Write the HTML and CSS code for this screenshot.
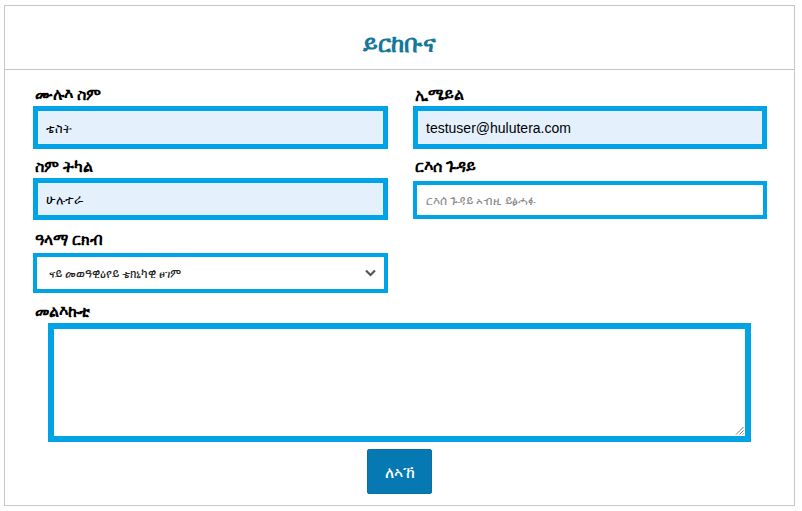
FILE: index.html
```html
<!DOCTYPE html>
<html lang="ti">
<head>
<meta charset="utf-8">
<title>ይርከቡና</title>
<link rel="stylesheet" href="styles.css">
</head>
<body>
<div class="card">
  <div class="header"><h1 class="title">ይርከቡና</h1></div>
  <form class="form">
    <div class="grid">
      <div class="field">
        <label class="label">ሙሉእ ስም</label>
        <input class="input filled" type="text" value="ቴስት">
      </div>
      <div class="field">
        <label class="label">ኢሜይል</label>
        <input class="input filled email" type="text" value="testuser@hulutera.com">
      </div>
      <div class="field row2">
        <label class="label">ስም ትካል</label>
        <input class="input filled tall2" type="text" value="ሁሉተራ">
      </div>
      <div class="field row2">
        <label class="label">ርእሰ ጉዳይ</label>
        <input class="input plain" type="text" placeholder="ርእሰ ጉዳይ ኣብዚ ይፅሓፉ">
      </div>
      <div class="field row3">
        <label class="label">ዓላማ ርክብ</label>
        <div class="select">
          <span class="select-text">ናይ መወዓዊዕየይ ቴክኒካዊ ፀገም</span>
          <svg class="chev" width="11" height="8" viewBox="0 0 11 8"><path d="M1 1.5 L5.5 6 L10 1.5" fill="none" stroke="#555" stroke-width="2.2"/></svg>
        </div>
      </div>
    </div>
    <div class="field row4">
      <label class="label">መልእኩቲ</label>
      <div class="textarea">
        <svg class="grip" width="9" height="9" viewBox="0 0 9 9"><path d="M8.5 1 L1 8.5 M8.5 4.5 L4.5 8.5 M8.5 7.5 L7.5 8.5" stroke="#777" stroke-width="1"/></svg>
      </div>
    </div>
    <div class="actions"><button class="button" type="button">ለኣኸ</button></div>
  </form>
</div>
</body>
</html>
```
FILE: styles.css
```css
* { box-sizing: border-box; }
html, body { margin: 0; padding: 0; background: #fff; }
body {
  font-family: "Noto Sans", "DejaVu Sans", "Liberation Sans", sans-serif;
  color: #000;
}
.card {
  margin: 5px 7px 5px 4px;
  width: 791px;
  height: 501px;
  border: 1px solid #c8c8c8;
}
.header {
  height: 64px;
  border-bottom: 1px solid #c8c8c8;
  display: flex;
  align-items: center;
  justify-content: center;
  padding-top: 10px;
}
.title {
  margin: 0;
  font-size: 24px;
  font-weight: bold;
  color: #17799a;
  line-height: 30px;
}
.form {
  padding: 14px 27px 0 28px;
}
.grid {
  display: grid;
  grid-template-columns: 355px 354px;
  column-gap: 25px;
}
.field { display: flex; flex-direction: column; align-items: flex-start; }
.label {
  display: block;
  font-size: 16px;
  font-weight: bold;
  line-height: 20px;
  height: 20px;
  margin-bottom: 2px;
  padding-left: 2px;
}
.input {
  width: 100%;
  height: 43px;
  border: 5px solid #00a4e6;
  padding: 0 8px;
  font-family: "Noto Sans", "DejaVu Sans", sans-serif;
  font-size: 13px;
  color: #000;
  outline: none;
}
.filled { background: #e5f0fd; }
.email { font-family: "Liberation Sans", Arial, sans-serif; font-size: 14px; }
.row2 { margin-top: 7px; }
.tall2 { height: 42px; }
.plain {
  height: 38px;
  margin-top: 3px;
  border-width: 4px;
  background: #fff;
  padding: 0 9px;
  width: 354px;
}
.plain::placeholder { color: #8a8a8a; font-size: 12px; }
.row3 { margin-top: 9px; }
.row3 .label { margin-bottom: 4px; }
.select {
  width: 355px;
  height: 40px;
  border: 4px solid #00a4e6;
  display: flex;
  align-items: center;
  justify-content: space-between;
  padding: 0 8px 0 12px;
  background: #fff;
}
.select-text { font-size: 12px; color: #222; }
.chev { display: block; }
.row4 { margin-top: 8px; }
.row4 .label { margin-bottom: 2px; }
.textarea {
  align-self: center;
  position: relative;
  width: 703px;
  height: 119px;
  border: 6px solid #00a4e6;
  background: #fff;
  margin-left: -1px;
}
.grip { position: absolute; right: 1px; bottom: 1px; }
.actions {
  display: flex;
  justify-content: center;
  margin-top: 7px;
}
.button {
  width: 65px;
  height: 45px;
  background: #0779b2;
  color: #fff;
  border: 1px solid #0a6fa3;
  border-radius: 2px;
  font-family: "Noto Sans", "DejaVu Sans", sans-serif;
  font-size: 16px;
  margin-left: -1px;
}
```
